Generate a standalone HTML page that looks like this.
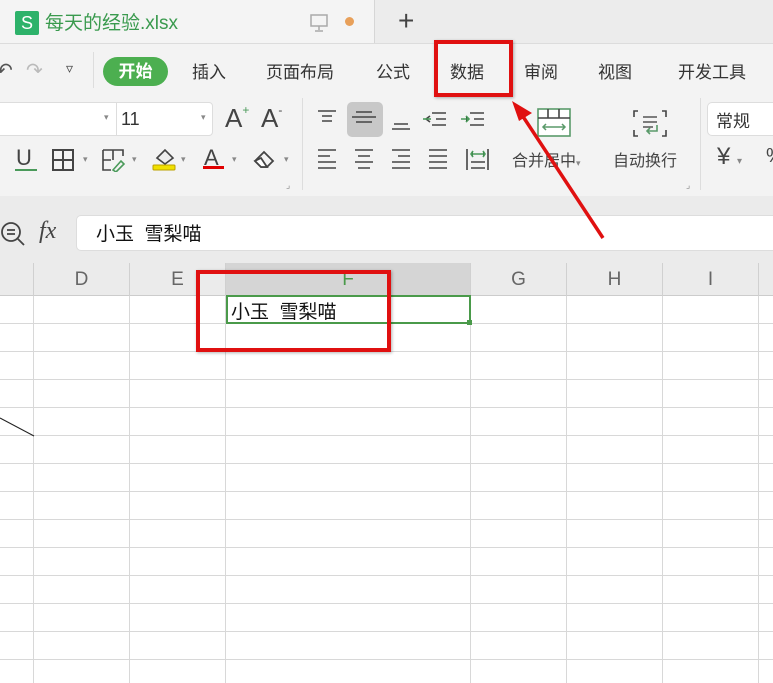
<!DOCTYPE html>
<html><head><meta charset="utf-8"><style>
*{margin:0;padding:0;box-sizing:border-box}
body{width:773px;height:683px;overflow:hidden;background:#fff;font-family:"Liberation Sans","Noto Sans CJK SC",sans-serif;position:relative;color:#333}
.a{position:absolute}
.t{font-size:17px;color:#333;white-space:nowrap}
.vl{position:absolute;top:296px;bottom:0;width:1px;background:#d8d8d8}
.hl{position:absolute;left:0;right:0;height:1px;background:#d8d8d8}
.ch{position:absolute;top:263px;height:33px;font-size:19px;color:#666;text-align:center;line-height:33px;border-right:1px solid #d0d0d0}
</style></head><body>
<div class="a" style="left:0;top:0;width:773px;height:43px;background:#ececec"></div>
<div class="a" style="left:0;top:0;width:375px;height:43px;background:#f4f4f4;border-right:1px solid #d6d6d6"></div>
<div class="a" style="left:15px;top:11px;width:24px;height:24px;background:#2db26a;border-radius:2px;color:#fff;font-size:18px;text-align:center;line-height:24px">S</div>
<div class="a t" style="left:45px;top:8px;font-size:19px;color:#3a9a4e">每天的经验.xlsx</div>
<svg class="a" style="left:309px;top:13px" width="22" height="20"><rect x="2" y="2" width="16" height="11" fill="none" stroke="#aaa" stroke-width="1.5"/><path d="M10 13v4M6 18h8" stroke="#aaa" stroke-width="1.5"/></svg>
<div class="a" style="left:345px;top:17px;width:9px;height:9px;border-radius:50%;background:#e8a05a"></div>
<div class="a" style="left:398px;top:5px;font-size:28px;color:#444">+</div>
<div class="a" style="left:0;top:43px;width:773px;height:1px;background:#dcdcdc"></div>
<div class="a" style="left:0;top:44px;width:773px;height:152px;background:#f3f3f3"></div>
<div class="a t" style="left:-4px;top:58px;color:#555;font-size:20px">↶</div>
<div class="a t" style="left:26px;top:58px;color:#bbb;font-size:20px">↷</div>
<div class="a t" style="left:66px;top:60px;font-size:14px;color:#444">▿</div>
<div class="a" style="left:93px;top:52px;width:1px;height:36px;background:#ddd"></div>
<div class="a" style="left:103px;top:57px;width:65px;height:29px;border-radius:15px;background:#4caf50;color:#fff;font-size:17px;font-weight:bold;text-align:center;line-height:29px">开始</div>
<div class="a t" style="left:192px;top:58px">插入</div>
<div class="a t" style="left:266px;top:58px">页面布局</div>
<div class="a t" style="left:376px;top:58px">公式</div>
<div class="a t" style="left:450px;top:58px">数据</div>
<div class="a t" style="left:524px;top:58px">审阅</div>
<div class="a t" style="left:598px;top:58px">视图</div>
<div class="a t" style="left:678px;top:58px">开发工具</div>
<div class="a" style="left:-5px;top:102px;width:218px;height:34px;background:#fff;border:1px solid #ddd;border-radius:4px"></div>
<div class="a" style="left:116px;top:103px;width:1px;height:32px;background:#ddd"></div>
<div class="a t" style="left:121px;top:109px;font-size:18px">11</div>
<div class="a" style="left:104px;top:112px;font-size:9px;color:#888">▾</div>
<div class="a" style="left:201px;top:112px;font-size:9px;color:#888">▾</div>
<div class="a t" style="left:225px;top:103px;font-size:26px;color:#444">A<span style="font-size:12px;vertical-align:top;color:#4a9a5a">+</span></div>
<div class="a t" style="left:261px;top:103px;font-size:26px;color:#444">A<span style="font-size:12px;vertical-align:top">-</span></div>
<div class="a t" style="left:16px;top:145px;font-size:22px;color:#444">U</div>
<div class="a" style="left:15px;top:169px;width:22px;height:2px;background:#4a9a5a"></div>
<svg class="a" style="left:51px;top:148px" width="24" height="24"><rect x="2" y="2" width="20" height="20" fill="none" stroke="#444" stroke-width="2"/><path d="M12 2v20M2 12h20" stroke="#444" stroke-width="2"/></svg>
<div class="a" style="left:83px;top:154px;font-size:9px;color:#888">▾</div>
<svg class="a" style="left:101px;top:148px" width="26" height="24"><path d="M2 2h20v6M2 2v20h8M12 2v10M2 12h8" fill="none" stroke="#444" stroke-width="1.6"/><path d="M12 22l8-9 3 3-8 8z" fill="none" stroke="#4a9a5a" stroke-width="1.6"/></svg>
<div class="a" style="left:132px;top:154px;font-size:9px;color:#888">▾</div>
<svg class="a" style="left:151px;top:146px" width="26" height="26"><path d="M6 12l8-8 8 8-8 6z" fill="#eee" stroke="#444" stroke-width="1.6"/><rect x="2" y="19" width="22" height="5" rx="1" fill="#f0e000" stroke="#bba000"/></svg>
<div class="a" style="left:181px;top:154px;font-size:9px;color:#888">▾</div>
<div class="a t" style="left:204px;top:145px;font-size:22px;color:#444">A</div>
<div class="a" style="left:203px;top:166px;width:21px;height:3px;background:#e00000"></div>
<div class="a" style="left:232px;top:154px;font-size:9px;color:#888">▾</div>
<svg class="a" style="left:252px;top:148px" width="26" height="22"><path d="M3 13l9-9 9 9-6 6H9z" fill="none" stroke="#444" stroke-width="1.8"/><path d="M3 13l6 6h6l-6-9z" fill="#fff" stroke="#444" stroke-width="1.8"/></svg>
<div class="a" style="left:284px;top:154px;font-size:9px;color:#888">▾</div>
<div class="a" style="left:286px;top:180px;font-size:9px;color:#888">⌟</div>
<div class="a" style="left:302px;top:98px;width:1px;height:92px;background:#ddd"></div>
<div class="a" style="left:347px;top:102px;width:36px;height:35px;background:#c8c8c8;border-radius:5px"></div>
<svg class="a" style="left:313px;top:105px" width="180" height="30" stroke="#444" stroke-width="1.6">
<path d="M5 6h18M9 11h10M9 16h10"/>
<path d="M39 12h24M43 7h16M43 17h16"/>
<path d="M79 24h18M81 19h14"/>
<path d="M119 8h14M123 14h10M119 20h14M113 14l4-3M113 14l4 3" /><path d="M110 14h8" stroke="#4a9a5a"/>
<path d="M157 8h14M161 14h10M157 20h14" /><path d="M148 14h8M153 11l3 3-3 3" stroke="#4a9a5a"/>
</svg>
<svg class="a" style="left:313px;top:146px" width="180" height="30" stroke="#444" stroke-width="1.6">
<path d="M5 4h18M5 10h12M5 16h18M5 22h18"/>
<path d="M42 4h18M45 10h12M42 16h18M45 22h12" />
<path d="M79 4h18M85 10h12M79 16h18M79 22h18"/>
<path d="M116 4h18M116 10h18M116 16h18M116 22h18"/>
<path d="M154 3v21M175 3v21M158 22h14M158 16h14"/><path d="M158 8h14M160 5l-2 3 2 3M170 5l2 3-2 3" stroke="#4a9a5a"/>
</svg>
<svg class="a" style="left:537px;top:108px" width="34" height="30"><rect x="1" y="1" width="32" height="27" fill="#fff" stroke="#5a9a6a" stroke-width="1.6"/><path d="M1 10h32M11 1v9M22 1v9" stroke="#444" stroke-width="1.6"/><path d="M6 19h22M9 16l-3 3 3 3M25 16l3 3-3 3" stroke="#5a9a6a" stroke-width="1.5" fill="none"/></svg>
<div class="a t" style="left:512px;top:147px;font-size:16px;color:#444">合并居中<span style="font-size:9px;color:#888">▾</span></div>
<svg class="a" style="left:632px;top:109px" width="36" height="30" fill="none" stroke="#444" stroke-width="1.6"><path d="M6 2H2v6M30 2h4v6M6 27H2v-6M30 27h4v-6"/><path d="M11 8h14M11 13h14M11 18h10" stroke="#555"/><path d="M25 16v6h-10M18 19l-3 3 3 3" stroke="#5a9a6a"/></svg>
<div class="a t" style="left:613px;top:147px;font-size:16px;color:#444">自动换行</div>
<div class="a" style="left:686px;top:180px;font-size:9px;color:#888">⌟</div>
<div class="a" style="left:700px;top:98px;width:1px;height:92px;background:#ddd"></div>
<div class="a" style="left:707px;top:102px;width:80px;height:34px;background:#fff;border:1px solid #ddd;border-radius:5px"></div>
<div class="a t" style="left:716px;top:107px;font-size:17px">常规</div>
<div class="a t" style="left:717px;top:143px;font-size:24px;color:#444">¥ <span style="font-size:10px;color:#888">▾</span></div>
<div class="a t" style="left:766px;top:145px;font-size:20px;color:#444">%</div>
<div class="a" style="left:0;top:196px;width:773px;height:67px;background:#ebebeb"></div>
<svg class="a" style="left:0;top:221px" width="26" height="26" fill="none" stroke="#444" stroke-width="1.8"><circle cx="11" cy="11" r="9"/><path d="M17 17l7 7M7 9h8M7 13h8"/></svg>
<div class="a" style="left:39px;top:218px;font-family:'Liberation Serif',serif;font-style:italic;font-size:24px;color:#444">fx</div>
<div class="a" style="left:76px;top:215px;width:710px;height:36px;background:#fff;border:1px solid #ddd;border-radius:5px"></div>
<div class="a t" style="left:96px;top:219px;font-size:19px;color:#111">小玉&nbsp; 雪梨喵</div>
<div class="a" style="left:0;top:263px;width:773px;height:33px;background:#ebebeb;border-bottom:1px solid #ccc"></div>
<div class="ch" style="left:0;width:34px"></div>
<div class="ch" style="left:34px;width:96px">D</div>
<div class="ch" style="left:130px;width:96px">E</div>
<div class="ch" style="left:226px;width:245px;background:#d5d5d5;color:#4a9a4a">F</div>
<div class="ch" style="left:471px;width:96px">G</div>
<div class="ch" style="left:567px;width:96px">H</div>
<div class="ch" style="left:663px;width:96px">I</div>
<div class="vl" style="left:33px"></div><div class="vl" style="left:129px"></div><div class="vl" style="left:225px"></div><div class="vl" style="left:470px"></div><div class="vl" style="left:566px"></div><div class="vl" style="left:662px"></div><div class="vl" style="left:758px"></div>
<div class="hl" style="top:323px"></div><div class="hl" style="top:351px"></div><div class="hl" style="top:379px"></div><div class="hl" style="top:407px"></div><div class="hl" style="top:435px"></div><div class="hl" style="top:463px"></div><div class="hl" style="top:491px"></div><div class="hl" style="top:519px"></div><div class="hl" style="top:547px"></div><div class="hl" style="top:575px"></div><div class="hl" style="top:603px"></div><div class="hl" style="top:631px"></div><div class="hl" style="top:659px"></div>
<svg class="a" style="left:0;top:410px" width="36" height="30"><path d="M0 8L34 26" stroke="#222" stroke-width="1"/></svg>
<div class="a" style="left:226px;top:295px;width:245px;height:29px;border:2px solid #4a9a4a"></div>
<div class="a" style="left:467px;top:320px;width:5px;height:5px;background:#4a9a4a"></div>
<div class="a t" style="left:231px;top:297px;font-size:19px;color:#111">小玉&nbsp; 雪梨喵</div>
<div class="a" style="left:434px;top:40px;width:79px;height:57px;border:4px solid #e01010;box-shadow:1px 1px 3px rgba(0,0,0,.3)"></div>
<div class="a" style="left:196px;top:270px;width:195px;height:82px;border:4px solid #e01010;box-shadow:1px 1px 3px rgba(0,0,0,.3)"></div>
<svg class="a" style="left:0;top:0" width="773" height="683"><path d="M603 238L522 115" stroke="#e01010" stroke-width="3.5"/><path d="M512 101l20 12-13 8z" fill="#e01010"/></svg>
</body></html>
